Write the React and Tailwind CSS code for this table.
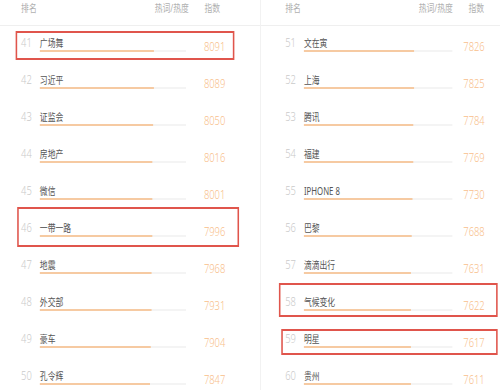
import React from "react";

const leftRows = [
  [41, "广场舞", 8091],
  [42, "习近平", 8089],
  [43, "证监会", 8050],
  [44, "房地产", 8016],
  [45, "微信", 8001],
  [46, "一带一路", 7996],
  [47, "地震", 7968],
  [48, "外交部", 7931],
  [49, "豪车", 7904],
  [50, "孔令辉", 7847],
];

const rightRows = [
  [51, "文在寅", 7826],
  [52, "上海", 7825],
  [53, "腾讯", 7784],
  [54, "福建", 7769],
  [55, "IPHONE 8", 7730],
  [56, "巴黎", 7688],
  [57, "滴滴出行", 7631],
  [58, "气候变化", 7622],
  [59, "明星", 7617],
  [60, "贵州", 7611],
];

const cjk = "font-['Noto_Sans','Noto_Sans_CJK_SC',sans-serif]";

function Panel({ rows, pad, track, gap }) {
  return (
    <div className="flex flex-col">
      {/* header */}
      <div className={`h-[26px] border-b border-[#efefef] flex items-start pt-[1px] text-[10px] leading-[14px] text-[#b0b0b0] ${pad}`}>
        <span className="w-[24px]">排名</span>
        <span className="ml-[147px]">热词/热度</span>
        <span className="ml-[20px]">指数</span>
      </div>
      {rows.map(([rank, name, value]) => (
        <div key={rank} className={`h-[37px] flex items-start ${pad}`}>
          <span className="w-[24px] pt-[10px] text-[12px] leading-[14px] font-light text-[#cacaca]">{rank}</span>
          <div className={`pt-[10px] ${track}`}>
            <div className="h-[14px] text-[10px] leading-[14px] text-[#555]">{name}</div>
            <div className="h-[2px] bg-[#f4f4f4]">
              <div className="h-[2px] bg-[#f6caa2]" style={{ width: value * 0.018 }} />
            </div>
          </div>
          <span className={`pt-[14px] text-[12px] leading-[14px] font-light text-[#f8c08c] ${gap}`}>{value}</span>
        </div>
      ))}
    </div>
  );
}

export default function App() {
  return (
    <div className="w-[500px] h-[390px] overflow-hidden bg-white">
      <div className={`relative w-[640px] h-[390px] origin-top-left scale-x-[0.78125] ${cjk}`}>
        <div className="grid grid-cols-[333px_1px_306px] h-full">
          <Panel rows={leftRows} pad="pl-[27px]" track="w-[187px]" gap="ml-[23px]" />
          <div className="bg-[#efefef]" />
          <Panel rows={rightRows} pad="pl-[31px]" track="w-[190px]" gap="ml-[14px]" />
        </div>

        {/* annotation boxes */}
        <div className="absolute left-[20px] top-[31px] w-[280px] h-[29px] border-2 border-[#e0554c]" />
        <div className="absolute left-[22px] top-[207px] w-[284px] h-[40px] border-2 border-[#e0554c]" />
        <div className="absolute left-[357px] top-[283px] w-[280px] h-[34px] border-2 border-[#e0554c]" />
        <div className="absolute left-[360px] top-[329px] w-[277px] h-[26px] border-2 border-[#e0554c]" />
      </div>
    </div>
  );
}
